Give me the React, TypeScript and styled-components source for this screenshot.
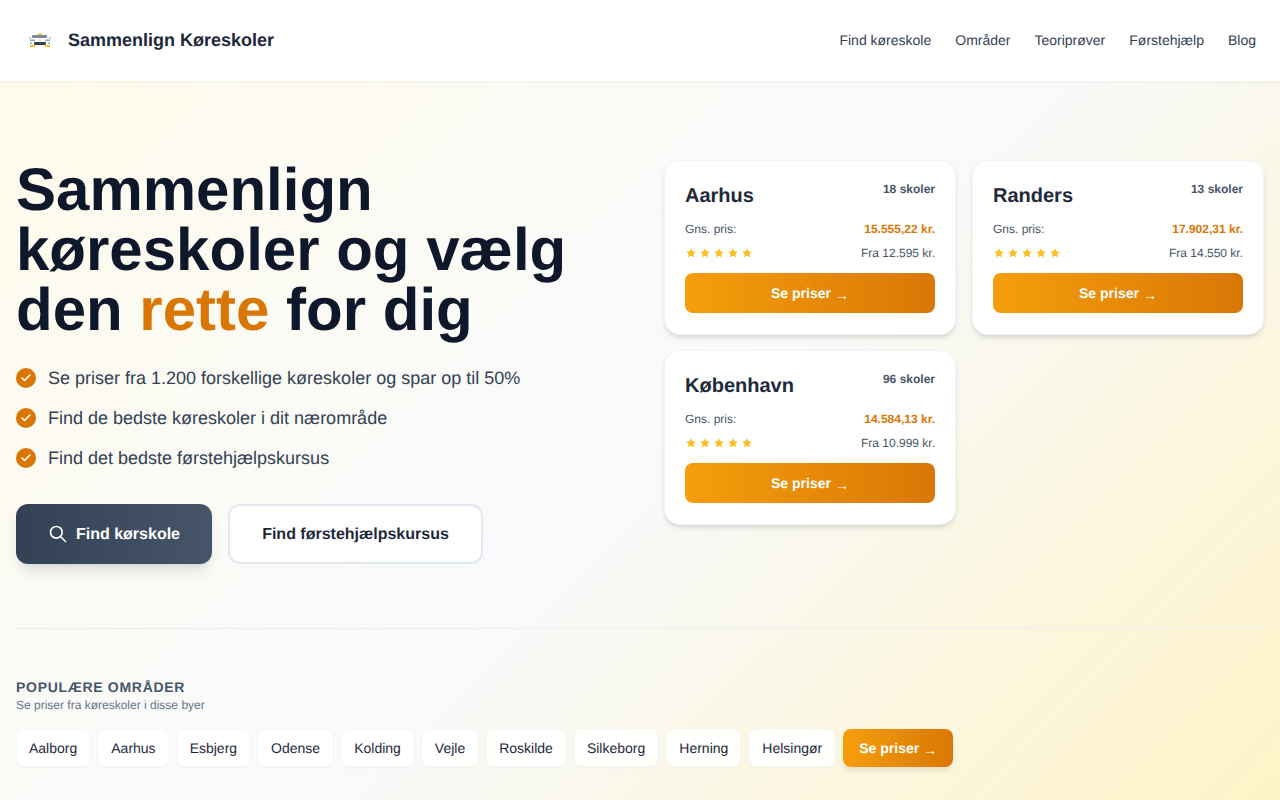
import React from 'react'
import styled, { createGlobalStyle } from 'styled-components'
import { Check } from 'lucide-react'

const GlobalStyle = createGlobalStyle`
  html, body { margin: 0; padding: 0; }
  body {
    font-family: "Liberation Sans", Arial, sans-serif;
    color: #1e293b;
    background: #fff;
    text-rendering: geometricPrecision;
  }
  * { box-sizing: border-box; }
`

const Page = styled.div`
  width: 1280px;
  height: 800px;
  overflow: hidden;
  display: flex;
  flex-direction: column;
`

const Header = styled.header`
  height: 81px;
  flex: none;
  display: flex;
  align-items: center;
  justify-content: space-between;
  padding: 0 24px 1px;
  background: #fff;
  box-shadow: 0 1px 3px rgba(0, 0, 0, 0.05);
  position: relative;
  z-index: 2;
`

const Brand = styled.a`
  display: flex;
  align-items: center;
  gap: 12px;
  font-size: 18px;
  font-weight: 700;
  color: #1e293b;
`

const Nav = styled.nav`
  display: flex;
  gap: 24px;
`

const NavLink = styled.a`
  font-size: 14px;
  color: #334155;
`

const Main = styled.main`
  flex: 1;
  padding: 79px 16px 0;
  background: linear-gradient(135deg, #fffbeb 0%, #f8fafc 50%, #fef3c7 100%);
`

const Hero = styled.section`
  display: grid;
  grid-template-columns: 584px 600px;
  column-gap: 64px;
  height: 469px;
  border-bottom: 1px solid #eceef0;
`

const Title = styled.h1`
  margin: 0 0 24px;
  font-size: 60px;
  line-height: 60px;
  font-weight: 700;
  color: #0f172a;
`

const Accent = styled.span`
  color: #d97706;
`

const Features = styled.ul`
  list-style: none;
  margin: 0 0 32px;
  padding: 0;
  display: flex;
  flex-direction: column;
  gap: 12px;
`

const Feature = styled.li`
  display: flex;
  align-items: center;
  gap: 12px;
  height: 28px;
  font-size: 18px;
  color: #334155;
`

const CheckDot = styled.span`
  width: 20px;
  height: 20px;
  border-radius: 50%;
  background: #d97706;
  color: #fff;
  display: flex;
  align-items: center;
  justify-content: center;
  flex: none;
`

const Actions = styled.div`
  display: flex;
  gap: 16px;
`

const PrimaryButton = styled.button`
  height: 60px;
  width: 196px;
  border: 0;
  border-radius: 12px;
  display: flex;
  align-items: center;
  justify-content: center;
  gap: 8px;
  font: 700 16px "Liberation Sans", Arial, sans-serif;
  text-rendering: geometricPrecision;
  color: #fff;
  background: linear-gradient(90deg, #334155, #475569);
  box-shadow: 0 10px 15px -3px rgba(0, 0, 0, 0.1), 0 4px 6px -4px rgba(0, 0, 0, 0.1);
`

const ButtonLabel = styled.span`
  margin-top: 2px;
`

const SecondaryButton = styled.button`
  height: 60px;
  width: 255px;
  padding: 2px 0 0;
  border: 2px solid #e2e8f0;
  border-radius: 12px;
  background: #fff;
  font: 700 16px "Liberation Sans", Arial, sans-serif;
  text-rendering: geometricPrecision;
  color: #1e293b;
`

const CardGrid = styled.div`
  display: grid;
  grid-template-columns: 292px 292px;
  grid-auto-rows: 175px;
  gap: 15px 16px;
  align-content: start;
`

const Card = styled.article`
  background: #fff;
  border: 1px solid #f1f5f9;
  border-radius: 16px;
  padding: 20px;
  box-shadow: 0 4px 6px -1px rgba(0, 0, 0, 0.1), 0 2px 4px -2px rgba(0, 0, 0, 0.1);
`

const CardTop = styled.div`
  display: flex;
  justify-content: space-between;
  align-items: flex-start;
  height: 28px;
  margin-bottom: 12px;
`

const CityName = styled.h3`
  margin: 1px 0 0;
  font-size: 20px;
  line-height: 28px;
  font-weight: 700;
  color: #1e293b;
`

const SchoolCount = styled.span`
  font-size: 12px;
  line-height: 16px;
  font-weight: 700;
  color: #475569;
`

const Row = styled.div`
  display: flex;
  justify-content: space-between;
  align-items: center;
  height: 16px;
  margin-bottom: 8px;
  font-size: 12px;
  color: #475569;
`

const Price = styled.span`
  font-weight: 700;
  color: #d97706;
`

const Stars = styled.span`
  display: flex;
  gap: 4px;
  padding-left: 1px;
  color: #fbbf24;
`

const Star = styled.svg`
  width: 10px;
  height: 10px;
  fill: currentColor;
`

const CtaButton = styled.button<{ $compact?: boolean }>`
  width: ${({ $compact }) => ($compact ? '110px' : '100%')};
  height: ${({ $compact }) => ($compact ? '38px' : '40px')};
  margin-top: ${({ $compact }) => ($compact ? '0' : '12px')};
  border: 0;
  border-radius: 8px;
  display: flex;
  align-items: center;
  justify-content: center;
  gap: 4px;
  font: 700 14px "Liberation Sans", Arial, sans-serif;
  text-rendering: geometricPrecision;
  color: #fff;
  background: linear-gradient(90deg, #f59e0b, #d97706);
  box-shadow: ${({ $compact }) => ($compact ? '0 4px 6px -1px rgba(0, 0, 0, 0.1)' : 'none')};
`

const Arrow = styled.span`
  margin-top: 4px;
`

const Areas = styled.section`
  padding-top: 49px;
`

const AreasTitle = styled.h2`
  margin: 0;
  font-size: 14px;
  line-height: 18px;
  font-weight: 700;
  letter-spacing: 0.7px;
  color: #475569;
`

const AreasSub = styled.p`
  margin: 1px 0 16px;
  font-size: 12px;
  line-height: 16px;
  color: #64748b;
`

const Pills = styled.div`
  display: flex;
  align-items: center;
  gap: 8px;
`

const Pill = styled.a`
  height: 38px;
  padding: 0 12px;
  display: flex;
  align-items: center;
  font-size: 14px;
  color: #1e293b;
  background: rgba(255, 255, 255, 0.9);
  border: 1px solid rgba(241, 245, 249, 0.6);
  border-radius: 8px;
  box-shadow: 0 1px 2px rgba(0, 0, 0, 0.04);
`

const cities = [
  { name: 'Aarhus', count: 18, avg: '15.555,22', from: '12.595' },
  { name: 'Randers', count: 13, avg: '17.902,31', from: '14.550' },
  { name: 'København', count: 96, avg: '14.584,13', from: '10.999' },
]

const features = [
  'Se priser fra 1.200 forskellige køreskoler og spar op til 50%',
  'Find de bedste køreskoler i dit nærområde',
  'Find det bedste førstehjælpskursus',
]

const areas = ['Aalborg', 'Aarhus', 'Esbjerg', 'Odense', 'Kolding', 'Vejle', 'Roskilde', 'Silkeborg', 'Herning', 'Helsingør']

const navItems = ['Find køreskole', 'Områder', 'Teoriprøver', 'Førstehjælp', 'Blog']

function CarLogo() {
  return (
    <svg width="32" height="32" viewBox="0 0 32 32">
      <rect x="14" y="9.5" width="4" height="1.5" fill="#fbbf24" />
      <rect x="8" y="11" width="15" height="3" rx="1" fill="#7c889b" />
      <rect x="5" y="13" width="2" height="1.5" fill="#b6bfcc" />
      <rect x="25" y="13" width="2" height="1.5" fill="#b6bfcc" />
      <rect x="6" y="15.5" width="5" height="1.5" fill="#9aa5b5" />
      <rect x="21" y="15.5" width="5" height="1.5" fill="#9aa5b5" />
      <rect x="14" y="15.5" width="3" height="1.5" fill="#fde68a" />
      <rect x="10" y="18" width="12" height="3" rx="1" fill="#334155" />
      <rect x="6" y="18.5" width="2" height="1.5" fill="#94a3b8" />
      <rect x="24" y="18.5" width="2" height="1.5" fill="#94a3b8" />
      <rect x="6" y="21" width="5" height="2" fill="#fbbf24" />
      <rect x="21" y="21" width="5" height="2" fill="#fbbf24" />
    </svg>
  )
}

function SearchGlyph() {
  return (
    <svg width="20" height="20" viewBox="0 0 24 24" fill="none" stroke="currentColor" strokeWidth="2" strokeLinecap="round" strokeLinejoin="round">
      <path d="M21 21l-6-6m2-5a7 7 0 11-14 0 7 7 0 0114 0z" />
    </svg>
  )
}

function CityCard({ name, count, avg, from }: { name: string; count: number; avg: string; from: string }) {
  return (
    <Card>
      <CardTop>
        <CityName>{name}</CityName>
        <SchoolCount>{count} skoler</SchoolCount>
      </CardTop>
      <Row>
        <span>Gns. pris:</span>
        <Price>{avg} kr.</Price>
      </Row>
      <Row>
        <Stars>
          {[0, 1, 2, 3, 4].map((i) => (
            <Star key={i} viewBox="0 0 20 20">
              <path d="M10 .5l2.9 6.2 6.6.8-4.9 4.5 1.3 6.6L10 15.3l-5.9 3.3 1.3-6.6L.5 7.5l6.6-.8z" />
            </Star>
          ))}
        </Stars>
        <span>Fra {from} kr.</span>
      </Row>
      <CtaButton>
        Se priser <Arrow>→</Arrow>
      </CtaButton>
    </Card>
  )
}

export default function App() {
  return (
    <Page>
      <GlobalStyle />
      <Header>
        <Brand>
          <CarLogo />
          Sammenlign Køreskoler
        </Brand>
        <Nav>
          {navItems.map((item) => (
            <NavLink key={item}>{item}</NavLink>
          ))}
        </Nav>
      </Header>
      <Main>
        <Hero>
          <div>
            <Title>
              Sammenlign køreskoler og vælg den <Accent>rette</Accent> for dig
            </Title>
            <Features>
              {features.map((text) => (
                <Feature key={text}>
                  <CheckDot>
                    <Check size={12} strokeWidth={3} />
                  </CheckDot>
                  {text}
                </Feature>
              ))}
            </Features>
            <Actions>
              <PrimaryButton>
                <SearchGlyph />
                <ButtonLabel>Find kørskole</ButtonLabel>
              </PrimaryButton>
              <SecondaryButton>Find førstehjælpskursus</SecondaryButton>
            </Actions>
          </div>
          <CardGrid>
            {cities.map((city) => (
              <CityCard key={city.name} {...city} />
            ))}
          </CardGrid>
        </Hero>
        <Areas>
          <AreasTitle>POPULÆRE OMRÅDER</AreasTitle>
          <AreasSub>Se priser fra køreskoler i disse byer</AreasSub>
          <Pills>
            {areas.map((area) => (
              <Pill key={area}>{area}</Pill>
            ))}
            <CtaButton $compact>
              Se priser <Arrow>→</Arrow>
            </CtaButton>
          </Pills>
        </Areas>
      </Main>
    </Page>
  )
}
